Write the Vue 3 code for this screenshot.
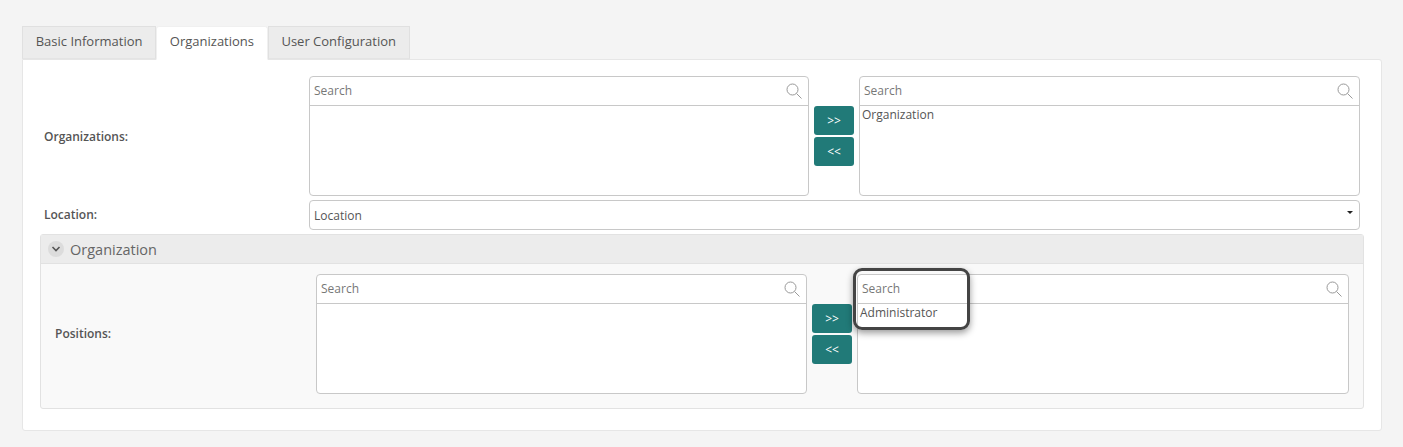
<template>
  <div class="page">
    <div class="tabs">
      <div v-for="t in tabs" :key="t" class="tab" :class="{ active: t === 'Organizations' }">{{ t }}</div>
    </div>

    <div class="panel">
      <div class="row row-list">
        <div class="lbl">Organizations:</div>
        <div class="picker">
          <div class="list">
            <div class="search"><span>Search</span><svg class="mag" viewBox="0 0 16 16"><circle cx="6.5" cy="6.5" r="5.5" /><path d="M10.5 10.5 15.5 15.5" /></svg></div>
          </div>
          <div class="btns">
            <button>&gt;&gt;</button>
            <button>&lt;&lt;</button>
          </div>
          <div class="list">
            <div class="search"><span>Search</span><svg class="mag" viewBox="0 0 16 16"><circle cx="6.5" cy="6.5" r="5.5" /><path d="M10.5 10.5 15.5 15.5" /></svg></div>
            <div class="item">Organization</div>
          </div>
        </div>
      </div>

      <div class="row row-select">
        <div class="lbl">Location:</div>
        <div class="select">
          <span>Location</span>
          <i class="caret"></i>
        </div>
      </div>

      <div class="section">
        <div class="section-head">
          <span class="toggle">
            <svg viewBox="0 0 10 10"><path d="M1.5 3 5 6.5 8.5 3" /></svg>
          </span>
          <span class="section-title">Organization</span>
        </div>
        <div class="section-body">
          <div class="lbl">Positions:</div>
          <div class="picker">
            <div class="list">
              <div class="search"><span>Search</span><svg class="mag" viewBox="0 0 16 16"><circle cx="6.5" cy="6.5" r="5.5" /><path d="M10.5 10.5 15.5 15.5" /></svg></div>
            </div>
            <div class="btns">
              <button>&gt;&gt;</button>
              <button>&lt;&lt;</button>
            </div>
            <div class="list">
              <div class="search"><span>Search</span><svg class="mag" viewBox="0 0 16 16"><circle cx="6.5" cy="6.5" r="5.5" /><path d="M10.5 10.5 15.5 15.5" /></svg></div>
              <div class="item">Administrator</div>
              <div class="callout"></div>
            </div>
          </div>
        </div>
      </div>
    </div>
  </div>
</template>

<script setup>
const tabs = ["Basic Information", "Organizations", "User Configuration"];
</script>

<style>
html,body{background:#f4f4f4}
</style>

<style scoped>
.page{box-sizing:border-box;width:1403px;height:447px;padding:26px 21px 0 22px;background:#f4f4f4;font-family:"Open Sans",sans-serif;font-size:13px;color:#555;overflow:hidden}
.tabs{display:flex;height:33px;position:relative;z-index:1}
.tab{box-sizing:border-box;height:33px;padding:0 12.7px;line-height:29px;background:#ececec;border:1px solid #e0e0e0;border-bottom:1px solid #e4e4e4;color:#555}
.tab.active{background:#fff;border-color:#f0f0f0;border-bottom-color:#fff;border-radius:3px 3px 0 0;height:34px}
.panel{box-sizing:border-box;height:372px;background:#fff;border:1px solid #e6e6e6;border-radius:0 3px 3px 3px;padding:16px 17px 0}
.row{display:flex;padding:0 4px}
.row-list{height:120px;margin-bottom:4px;align-items:center}
.row-select{height:30px;margin-bottom:4px}
.lbl{font-size:12px;font-weight:600;color:#555;width:265px;flex:none}
.row-select .lbl{line-height:30px}
.picker{display:flex;flex:1;height:120px}
.list{position:relative;box-sizing:border-box;flex:1 0 2px;height:120px;background:#fff;border:1px solid #c8c8c8;border-radius:4px}
.list:last-child{flex-basis:3px}
.search{box-sizing:border-box;height:29px;border-bottom:1px solid #c8c8c8;padding:0 4px 1px;display:flex;align-items:center;justify-content:space-between;color:#777;font-size:12px}
.mag{width:16px;height:16px;fill:none;stroke:#999;stroke-width:1;margin-right:2px}
.item{padding:0 2px;line-height:18px;color:#555;font-size:12px}
.btns{flex:none;width:50px;display:flex;flex-direction:column;align-items:center;padding-top:30px;gap:2px}
.btns button{width:40px;height:29px;padding:0;border:none;border-radius:3px;background:#217a78;color:#fff;font-family:inherit;font-size:12px}
.select{box-sizing:border-box;flex:1;height:30px;border:1px solid #c8c8c8;border-radius:4px;padding:0 4px;display:flex;align-items:center;justify-content:space-between;background:#fff;font-size:12px}
.caret{width:0;height:0;margin:0 2px 6px 0;border:3px solid transparent;border-top:3px solid #222;border-bottom:0}
.section{box-sizing:border-box;height:175px;border:1px solid #e2e2e2;border-radius:3px;background:#f9f9f9}
.section-head{box-sizing:border-box;height:29px;background:#ececec;border-bottom:1px solid #e2e2e2;display:flex;align-items:center;padding-left:7px;gap:6px}
.toggle{width:16px;height:16px;border-radius:50%;background:#dcdcdc;display:flex;align-items:center;justify-content:center}
.toggle svg{width:10px;height:10px;fill:none;stroke:#555;stroke-width:1.6}
.section-title{font-size:14.5px;color:#666}
.section-body{display:flex;align-items:center;padding:10px 14px 14px}
.section-body .lbl{width:261px;padding-bottom:2px}
.callout{position:absolute;left:-5px;top:-7px;box-sizing:border-box;width:117px;height:62px;border:3px solid #444;border-radius:9px;box-shadow:0 3px 7px rgba(0,0,0,.4);pointer-events:none}
</style>
